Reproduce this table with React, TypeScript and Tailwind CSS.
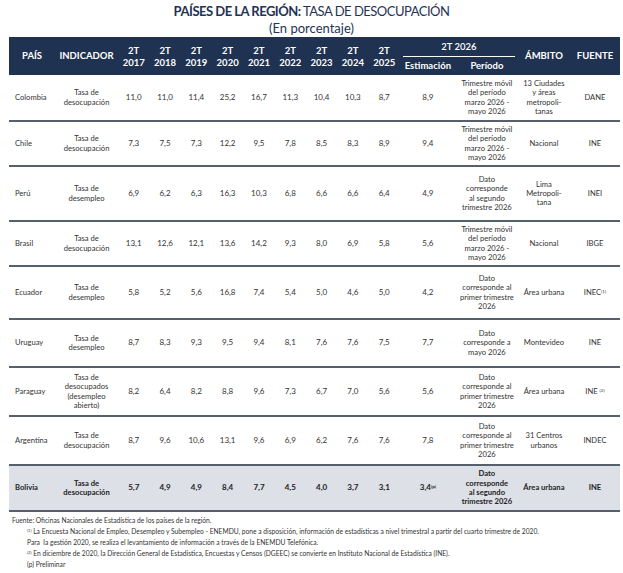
type Row = {
  pais: string;
  indicador: string[];
  vals: string[];
  est: string;
  estSup?: string;
  periodo: string[];
  ambito: string[];
  fuente: string;
  fuenteSup?: string;
  h: string;
  bold?: boolean;
};

const trimestre = ['Trimestre móvil', 'del período', 'marzo 2026 -', 'mayo 2026'];
const primer = ['Dato', 'corresponde al', 'primer trimestre', '2026'];
const segundo = ['Dato', 'corresponde', 'al segundo', 'trimestre 2026'];

const rows: Row[] = [
  {
    pais: 'Colombia',
    indicador: ['Tasa de', 'desocupación'],
    vals: ['11,0', '11,0', '11,4', '25,2', '16,7', '11,3', '10,4', '10,3', '8,7'],
    est: '8,9',
    periodo: trimestre,
    ambito: ['13 Ciudades', 'y áreas', 'metropoli-', 'tanas'],
    fuente: 'DANE',
    h: 'h-[46px]',
  },
  {
    pais: 'Chile',
    indicador: ['Tasa de', 'desocupación'],
    vals: ['7,3', '7,5', '7,3', '12,2', '9,5', '7,8', '8,5', '8,3', '8,9'],
    est: '9,4',
    periodo: trimestre,
    ambito: ['Nacional'],
    fuente: 'INE',
    h: 'h-[45px]',
  },
  {
    pais: 'Perú',
    indicador: ['Tasa de', 'desempleo'],
    vals: ['6,9', '6,2', '6,3', '16,3', '10,3', '6,8', '6,6', '6,6', '6,4'],
    est: '4,9',
    periodo: segundo,
    ambito: ['Lima', 'Metropoli-', 'tana'],
    fuente: 'INEI',
    h: 'h-[55px]',
  },
  {
    pais: 'Brasil',
    indicador: ['Tasa de', 'desocupación'],
    vals: ['13,1', '12,6', '12,1', '13,6', '14,2', '9,3', '8,0', '6,9', '5,8'],
    est: '5,6',
    periodo: trimestre,
    ambito: ['Nacional'],
    fuente: 'IBGE',
    h: 'h-[45px]',
  },
  {
    pais: 'Ecuador',
    indicador: ['Tasa de', 'desempleo'],
    vals: ['5,8', '5,2', '5,6', '16,8', '7,4', '5,4', '5,0', '4,6', '5,0'],
    est: '4,2',
    periodo: primer,
    ambito: ['Área urbana'],
    fuente: 'INEC',
    fuenteSup: '(1)',
    h: 'h-[53px]',
  },
  {
    pais: 'Uruguay',
    indicador: ['Tasa de', 'desempleo'],
    vals: ['8,7', '8,3', '9,3', '9,5', '9,4', '8,1', '7,6', '7,6', '7,5'],
    est: '7,7',
    periodo: ['Dato', 'corresponde a', 'mayo 2026'],
    ambito: ['Montevideo'],
    fuente: 'INE',
    h: 'h-[48px]',
  },
  {
    pais: 'Paraguay',
    indicador: ['Tasa de', 'desocupados', '(desempleo', 'abierto)'],
    vals: ['8,2', '6,4', '8,2', '8,8', '9,6', '7,3', '6,7', '7,0', '5,6'],
    est: '5,6',
    periodo: primer,
    ambito: ['Área urbana'],
    fuente: 'INE ',
    fuenteSup: '(2)',
    h: 'h-[49px]',
  },
  {
    pais: 'Argentina',
    indicador: ['Tasa de', 'desocupación'],
    vals: ['8,7', '9,6', '10,6', '13,1', '9,6', '6,9', '6,2', '7,6', '7,6'],
    est: '7,8',
    periodo: primer,
    ambito: ['31 Centros', 'urbanos'],
    fuente: 'INDEC',
    h: 'h-[49px]',
  },
  {
    pais: 'Bolivia',
    indicador: ['Tasa de', 'desocupación'],
    vals: ['5,7', '4,9', '4,9', '8,4', '7,7', '4,5', '4,0', '3,7', '3,1'],
    est: '3,4',
    estSup: '(p)',
    periodo: segundo,
    ambito: ['Área urbana'],
    fuente: 'INE',
    h: 'h-[46px]',
    bold: true,
  },
];

const years = ['2017', '2018', '2019', '2020', '2021', '2022', '2023', '2024', '2025'];

function Lines({ items }: { items: string[] }) {
  return (
    <>
      {items.map((t, i) => (
        <span key={i} className="block">
          {t}
        </span>
      ))}
    </>
  );
}

export default function App() {
  return (
    <div className="h-[573px] w-[623px] overflow-hidden bg-white font-['Lato',sans-serif] text-[#333]">
      {/* Title */}
      <div className="pt-[3px] text-center text-[#1f3355]">
        <h1 className="text-[13px] leading-[17px] tracking-[-0.5px]">
          <span className="font-bold">PAÍSES DE LA REGIÓN:</span> TASA DE DESOCUPACIÓN
        </h1>
        <p className="text-[13px] leading-[16px]">(En porcentaje)</p>
      </div>

      <table className="ml-[9px] mt-[1px] w-[611px] table-fixed border-collapse">
        <colgroup>
          <col className="w-[46px]" />
          <col className="w-[63px]" />
          {years.map((y) => (
            <col key={y} className="w-[31.3px]" />
          ))}
          <col className="w-[56px]" />
          <col className="w-[62px]" />
          <col className="w-[52px]" />
          <col className="w-[50px]" />
        </colgroup>
        <thead className="bg-[#1f3251] text-[9.5px] font-bold leading-[12px] text-white">
          <tr className="h-[20px]">
            <th rowSpan={2} className="text-center">
              PAÍS
            </th>
            <th rowSpan={2} className="text-center">
              INDICADOR
            </th>
            {years.map((y) => (
              <th key={y} rowSpan={2} className="pt-[2px] text-center font-bold">
                2T
                <br />
                {y}
              </th>
            ))}
            <th colSpan={2} className="pt-[3px] text-center align-middle">
              <div className="mx-[3px] border-b border-white pb-[3px] font-semibold">2T 2026</div>
            </th>
            <th rowSpan={2} className="text-center">
              ÁMBITO
            </th>
            <th rowSpan={2} className="text-center">
              FUENTE
            </th>
          </tr>
          <tr className="h-[18px]">
            <th className="text-center">Estimación</th>
            <th className="text-center">Período</th>
          </tr>
        </thead>
        <tbody className="text-[7.6px] leading-[9.3px]">
          {rows.map((r) => (
            <tr
              key={r.pais}
              className={`${r.h} border-b-2 border-[#56606d] ${
                r.bold ? 'border-t-2 bg-[#dde0e6] font-bold text-[#222]' : ''
              }`}
            >
              <td className="pl-[6px] text-left">{r.pais}</td>
              <td className="text-center">
                <Lines items={r.indicador} />
              </td>
              {r.vals.map((v, i) => (
                <td key={i} className="text-center text-[8px]">
                  {v}
                </td>
              ))}
              <td className="text-center text-[8px]">
                {r.est}
                {r.estSup ? <sup className="text-[4.5px]">{r.estSup}</sup> : null}
              </td>
              <td className="text-center">
                <Lines items={r.periodo} />
              </td>
              <td className="text-center">
                <Lines items={r.ambito} />
              </td>
              <td className="text-center">
                {r.fuente}
                {r.fuenteSup ? <sup className="text-[4.5px]">{r.fuenteSup}</sup> : null}
              </td>
            </tr>
          ))}
        </tbody>
      </table>

      {/* Notes */}
      <div className="mt-[3px] text-[6.7px] leading-[11px] text-[#333]">
        <p className="pl-[12px]">Fuente: Oficinas Nacionales de Estadística de los países de la región.</p>
        <div className="pl-[27px]">
          <p>
            <sup className="text-[4px]">(1)</sup> La Encuesta Nacional de Empleo, Desempleo y Subempleo - ENEMDU, pone a
            disposición, información de estadísticas a nivel trimestral a partir del cuarto trimestre de 2020.
          </p>
          <p>Para&nbsp; la gestión 2020, se realiza el levantamiento de información a través de la ENEMDU Telefónica.</p>
          <p>
            <sup className="text-[4px]">(2)</sup> En diciembre de 2020, la Dirección General de Estadística, Encuestas y
            Censos (DGEEC) se convierte en Instituto Nacional de Estadística (INE).
          </p>
          <p>(p) Preliminar</p>
        </div>
      </div>
    </div>
  );
}
